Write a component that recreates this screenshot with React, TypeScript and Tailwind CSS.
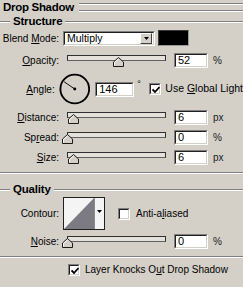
import React from "react";

function Etched() {
  return <div className="h-[2px] border-t border-t-[#808080] border-b border-b-white" />;
}

function Legend({ label }: { label: string }) {
  return (
    <div className="flex items-center h-[13px]">
      <div className="w-[10px]">
        <Etched />
      </div>
      <span className="px-[3px] font-bold text-[11.5px] leading-[13px] tracking-[-0.2px]">{label}</span>
      <div className="flex-1">
        <Etched />
      </div>
    </div>
  );
}

function Sunken({ className, children }: { className?: string; children?: React.ReactNode }) {
  return (
    <div
      className={`border border-t-[#808080] border-l-[#808080] border-b-white border-r-white ${className ?? ""}`}
    >
      <div className="h-full w-full border border-t-[#202020] border-l-[#202020] border-b-[#d4d0c8] border-r-[#d4d0c8] bg-white">
        {children}
      </div>
    </div>
  );
}

function Thumb() {
  return (
    <svg width="11" height="10" viewBox="0 0 11 10">
      <path d="M5.5 0.5 L10.5 5 L10.5 9.5 L0.5 9.5 L0.5 5 Z" fill="#d4d0c8" stroke="#1a1a1a" />
      <path d="M5.5 2 L1.5 5.5 L1.5 8.5" fill="none" stroke="#ffffff" />
    </svg>
  );
}

function Slider({ pos }: { pos: number }) {
  return (
    <div className="relative ml-[8px] w-[99px] h-[14px]">
      <div className="mt-[2px] h-[6px] border border-[#303030] border-b-[#606060] bg-[#e4e1da]" />
      <div className="absolute top-[4px]" style={{ left: pos - 5 }}>
        <Thumb />
      </div>
    </div>
  );
}

function Label({ children }: { children: React.ReactNode }) {
  return <div className="w-[59px] text-right whitespace-nowrap">{children}</div>;
}

function SliderRow({
  label,
  pos,
  value,
  unit,
  className,
}: {
  label: React.ReactNode;
  pos: number;
  value: string;
  unit: string;
  className?: string;
}) {
  return (
    <div className={`flex items-center h-[14px] ${className ?? ""}`}>
      <Label>{label}</Label>
      <Slider pos={pos} />
      <Sunken className="ml-[8px] w-[34px] h-[15px]">
        <div className="pl-[2px] leading-[11px] text-[11px]">{value}</div>
      </Sunken>
      <span className="ml-[5px] text-[#202020]">{unit}</span>
    </div>
  );
}

function CheckBox({ checked }: { checked?: boolean }) {
  return (
    <Sunken className="w-[12px] h-[12px] shrink-0">
      {checked && (
        <svg width="8" height="8" viewBox="0 0 8 8" className="ml-[1px] mt-[1px]">
          <path d="M0.5 3.5 L3 6 L7.5 1" fill="none" stroke="#000" strokeWidth="1.8" />
        </svg>
      )}
    </Sunken>
  );
}

export default function App() {
  return (
    <div className="w-[243px] h-[287px] overflow-hidden bg-[#d4d0c8] text-black text-[10px] font-['Liberation_Sans',Arial,sans-serif] select-none">
      {/* title */}
      <div className="flex h-[15px]">
        <span className="pl-[3px] font-bold text-[11.5px] leading-[15px] tracking-[-0.3px] whitespace-nowrap">
          Drop Shadow
        </span>
        <div className="flex-1 ml-[5px] pt-[3px]">
          <Etched />
          <div className="mt-[5px]">
            <Etched />
          </div>
        </div>
      </div>

      <Legend label="Structure" />

      {/* blend mode */}
      <div className="flex items-center h-[16px] mt-[2px]">
        <div className="w-[59px] text-right whitespace-nowrap">
          Blend <u>M</u>ode:
        </div>
        <Sunken className="ml-[4px] w-[92px] h-[15px]">
          <div className="flex h-full items-center">
            <span className="flex-1 pl-[2px] text-[10.5px] leading-[11px]">Multiply</span>
            <div className="w-[12px] h-[11px] mr-[1px] flex items-center justify-center bg-[#d4d0c8] border border-t-white border-l-white border-b-[#404040] border-r-[#404040]">
              <svg width="5" height="3" viewBox="0 0 5 3">
                <path d="M0 0 H5 L2.5 3 Z" fill="#000" />
              </svg>
            </div>
          </div>
        </Sunken>
        <div className="ml-[3px] w-[31px] h-[16px] bg-black border border-[#3a3a3a] border-b-[#9a9a9a] border-r-[#9a9a9a]" />
      </div>

      <SliderRow
        className="mt-[7px]"
        label={
          <>
            <u>O</u>pacity:
          </>
        }
        pos={51}
        value="52"
        unit="%"
      />

      {/* angle */}
      <div className="flex items-center h-[34px] mt-[5px]">
        <Label>
          <u>A</u>ngle:
        </Label>
        <svg width="34" height="34" viewBox="0 0 34 34" className="ml-[4px]">
          <circle cx="17" cy="17" r="15.5" fill="none" stroke="#000" strokeWidth="2" />
          <line x1="17" y1="17" x2="5.5" y2="9.2" stroke="#000" strokeWidth="1" />
          <circle cx="17" cy="17" r="1.6" fill="#000" />
        </svg>
        <Sunken className="ml-[5px] w-[42px] h-[15px]">
          <div className="pl-[2px] leading-[11px] text-[11px]">146</div>
        </Sunken>
        <span className="ml-[3px] w-[13px] self-start mt-[8px] text-[9px] leading-[9px]">°</span>
        <CheckBox checked />
        <span className="ml-[4px] whitespace-nowrap text-[10.5px]">
          Use <u>G</u>lobal Light
        </span>
      </div>

      <SliderRow
        className="mt-[4px]"
        label={
          <>
            <u>D</u>istance:
          </>
        }
        pos={6}
        value="6"
        unit="px"
      />
      <SliderRow
        className="mt-[6px]"
        label={
          <>
            Sp<u>r</u>ead:
          </>
        }
        pos={0}
        value="0"
        unit="%"
      />
      <SliderRow
        className="mt-[6px]"
        label={
          <>
            <u>S</u>ize:
          </>
        }
        pos={6}
        value="6"
        unit="px"
      />

      <div className="mt-[8px]">
        <Etched />
      </div>

      <div className="mt-[9px]">
        <Legend label="Quality" />
      </div>

      {/* contour */}
      <div className="flex items-center h-[33px] mt-[1px]">
        <Label>Contour:</Label>
        <svg width="42" height="33" viewBox="0 0 42 33" className="ml-[4px]">
          <rect x="0.5" y="0.5" width="41" height="32" fill="#f4f4f4" stroke="#202020" />
          <path d="M1 32 L31 1 L31 32 Z" fill="#7c7b84" />
          <line x1="31.5" y1="1" x2="31.5" y2="32" stroke="#8a8a8a" />
          <path d="M34 13 H39 L36.5 16 Z" fill="#000" />
        </svg>
        <div className="ml-[13px]">
          <CheckBox />
        </div>
        <span className="ml-[6px] whitespace-nowrap">
          Anti-a<u>l</u>iased
        </span>
      </div>

      <SliderRow
        className="mt-[4px]"
        label={
          <>
            <u>N</u>oise:
          </>
        }
        pos={0}
        value="0"
        unit="%"
      />

      <div className="mt-[8px]">
        <Etched />
      </div>

      <div className="flex items-center h-[13px] mt-[5px] pl-[68px]">
        <CheckBox checked />
        <span className="ml-[5px] whitespace-nowrap">
          Layer Knocks O<u>u</u>t Drop Shadow
        </span>
      </div>
    </div>
  );
}
